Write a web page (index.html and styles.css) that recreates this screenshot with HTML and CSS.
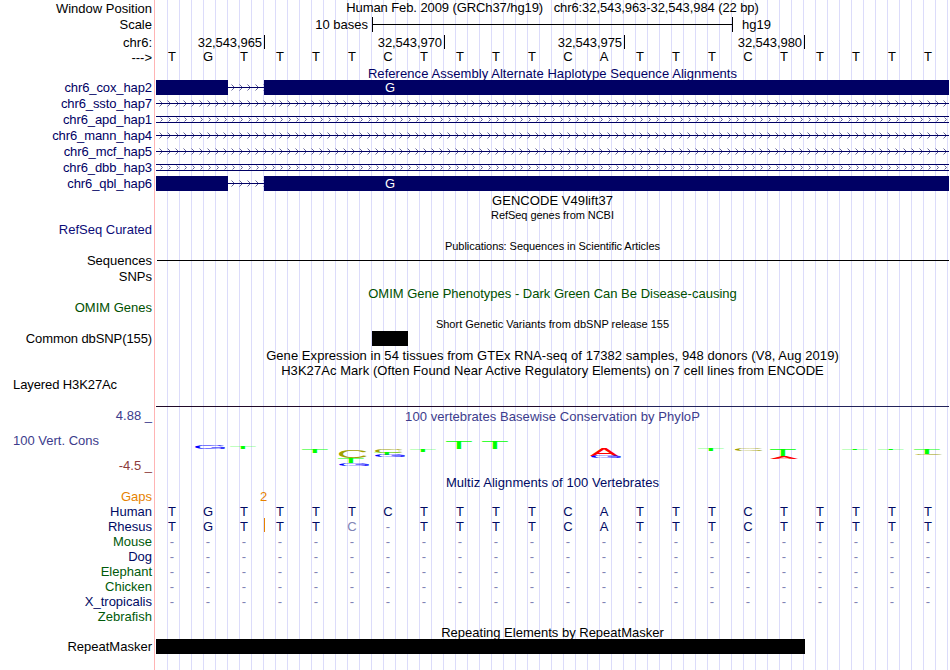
FILE: index.html
```html
<!DOCTYPE html>
<html lang="en">
<head>
    <meta charset="UTF-8">
    <meta name="viewport" content="width=device-width, initial-scale=1.0">
    <title>chr6:32,543,963-32,543,984</title>
    <link rel="stylesheet" href="styles.css">
</head>
<body>

    <!-- Shared arrow patterns -->
    <svg class="defs" width="0" height="0">
        <defs>
            <pattern id="arrows" width="8" height="15" patternUnits="userSpaceOnUse">
                <path class="chevron" d="M3.5 4.5l3 3l-3 3"/>
            </pattern>
            <pattern id="arrows-small" width="8" height="15" patternUnits="userSpaceOnUse">
                <path class="chevron" d="M4.5 5.5l2 2l-2 2"/>
            </pattern>
        </defs>
    </svg>

    <div class="browser">

        <!-- Ruler -->
        <div class="row">
            <div class="label low">Window Position</div>
            <div class="track title position">Human Feb. 2009 (GRCh37/hg19)   chr6:32,543,963-32,543,984 (22 bp)</div>
        </div>
        <div class="row gap2">
            <div class="label">Scale</div>
            <div class="track scale">
                <span class="scale-size">10 bases</span>
                <span class="scale-bar"></span>
                <span>hg19</span>
            </div>
        </div>
        <div class="row short gap3">
            <div class="label">chr6:</div>
            <div class="track ticks">
                <span class="tick first">32,543,965</span>
                <span class="tick">32,543,970</span>
                <span class="tick">32,543,975</span>
                <span class="tick">32,543,980</span>
            </div>
        </div>
        <div class="row">
            <div class="label low">---&gt;</div>
            <div class="track bases" data-seq="TGTTTTCTTTTCATTTCTTTTT"></div>
        </div>

        <!-- Haplotypes -->
        <div class="row short gap2 navy">
            <div class="label"></div>
            <div class="track title wide">Reference Assembly Alternate Haplotype Sequence Alignments</div>
        </div>
        <div class="row tall navy">
            <div class="label">chr6_cox_hap2</div>
            <div class="track hap" data-hap="block"></div>
        </div>
        <div class="row tall navy">
            <div class="label">chr6_ssto_hap7</div>
            <div class="track hap" data-hap="single"></div>
        </div>
        <div class="row tall navy">
            <div class="label">chr6_apd_hap1</div>
            <div class="track hap" data-hap="double"></div>
        </div>
        <div class="row tall navy">
            <div class="label">chr6_mann_hap4</div>
            <div class="track hap" data-hap="single"></div>
        </div>
        <div class="row tall navy">
            <div class="label">chr6_mcf_hap5</div>
            <div class="track hap" data-hap="single"></div>
        </div>
        <div class="row tall navy">
            <div class="label">chr6_dbb_hap3</div>
            <div class="track hap" data-hap="double"></div>
        </div>
        <div class="row tall navy">
            <div class="label">chr6_qbl_hap6</div>
            <div class="track hap" data-hap="block"></div>
        </div>

        <!-- Genes -->
        <div class="row short gap1">
            <div class="label"></div>
            <div class="track title wide">GENCODE V49lift37</div>
        </div>
        <div class="row">
            <div class="label"></div>
            <div class="track title small">RefSeq genes from NCBI</div>
        </div>
        <div class="row">
            <div class="label refseq">RefSeq Curated</div>
            <div class="track"></div>
        </div>

        <!-- Publications -->
        <div class="row gap1">
            <div class="label"></div>
            <div class="track title small">Publications: Sequences in Scientific Articles</div>
        </div>
        <div class="row">
            <div class="label">Sequences</div>
            <div class="track"><div class="seq-line"></div></div>
        </div>
        <div class="row gap1">
            <div class="label">SNPs</div>
            <div class="track"></div>
        </div>

        <!-- OMIM and dbSNP -->
        <div class="row short gap2 green">
            <div class="label"></div>
            <div class="track title">OMIM Gene Phenotypes - Dark Green Can Be Disease-causing</div>
        </div>
        <div class="row green">
            <div class="label">OMIM Genes</div>
            <div class="track"></div>
        </div>
        <div class="row gap1">
            <div class="label"></div>
            <div class="track title small variants">Short Genetic Variants from dbSNP release 155</div>
        </div>
        <div class="row">
            <div class="label tight">Common dbSNP(155)</div>
            <div class="track"><div class="snp"></div></div>
        </div>

        <!-- Expression and regulation -->
        <div class="row gap2">
            <div class="label"></div>
            <div class="track title wide">Gene Expression in 54 tissues from GTEx RNA-seq of 17382 samples, 948 donors (V8, Aug 2019)</div>
        </div>
        <div class="row short">
            <div class="label"></div>
            <div class="track title wide">H3K27Ac Mark (Often Found Near Active Regulatory Elements) on 7 cell lines from ENCODE</div>
        </div>
        <div class="row layered">
            <div class="label left tight">Layered H3K27Ac</div>
            <div class="track"></div>
        </div>

        <!-- Conservation -->
        <div class="row phylop">
            <div class="label limits">
                <span>4.88 _</span>
                <span class="left">100 Vert. Cons</span>
                <span class="min">-4.5 _</span>
            </div>
            <div class="track">
                <div class="title wide">100 vertebrates Basewise Conservation by PhyloP</div>
                <svg id="logo" width="793" height="51" viewBox="156 424 793 51"></svg>
            </div>
        </div>

        <!-- Multiz -->
        <div class="row short blue">
            <div class="label"></div>
            <div class="track title wide">Multiz Alignments of 100 Vertebrates</div>
        </div>
        <div class="row orange">
            <div class="label">Gaps</div>
            <div class="track"><div class="gap-count">2</div></div>
        </div>
        <div class="row blue">
            <div class="label">Human</div>
            <div class="track bases" data-seq="TGTTTTCTTTTCATTTCTTTTT"></div>
        </div>
        <div class="row blue">
            <div class="label">Rhesus</div>
            <div class="track bases" data-seq="TGT|TTc-TTTTCATTTCTTTTT"></div>
        </div>
        <div class="row darkgreen">
            <div class="label">Mouse</div>
            <div class="track bases" data-seq="----------------------"></div>
        </div>
        <div class="row blue">
            <div class="label">Dog</div>
            <div class="track bases" data-seq="----------------------"></div>
        </div>
        <div class="row darkgreen">
            <div class="label">Elephant</div>
            <div class="track bases" data-seq="----------------------"></div>
        </div>
        <div class="row darkgreen">
            <div class="label">Chicken</div>
            <div class="track bases" data-seq="----------------------"></div>
        </div>
        <div class="row blue">
            <div class="label">X_tropicalis</div>
            <div class="track bases" data-seq="----------------------"></div>
        </div>
        <div class="row darkgreen">
            <div class="label">Zebrafish</div>
            <div class="track"></div>
        </div>

        <!-- Repeats -->
        <div class="row short gap1">
            <div class="label"></div>
            <div class="track title">Repeating Elements by RepeatMasker</div>
        </div>
        <div class="row">
            <div class="label">RepeatMasker</div>
            <div class="track"><div class="repeat"></div></div>
        </div>
    </div>

    <script src="tracks.js"></script>
</body>
</html>
```
FILE: styles.css
```css
body {
    margin: 0;
    background: white;
    font-family: "Liberation Sans", Arial, Helvetica, sans-serif;
    font-size: 13px;
    line-height: 15px;
    color: #000;
    overflow: hidden;
}
.defs {
    display: block;
}
/* Guidelines every 12px, pink line between labels and tracks */
.browser {
    width: 950px;
    height: 670px;
    background:
        linear-gradient(#ffb4b4, #ffb4b4) 154px 0 / 1px 100% no-repeat,
        repeating-linear-gradient(to right, transparent 0 11px, #dcdcfa 11px 12px) 156px 0 / 794px 100% no-repeat;
}

/* Rows */
.row {
    display: flex;
    gap: 4px;
    height: 15px;
    white-space: pre;
}
.short {
    height: 14px;
}
.tall {
    height: 16px;
}
.gap1 {
    margin-top: 1px;
}
.gap2 {
    margin-top: 2px;
}
.gap3 {
    margin-top: 3px;
}
.label {
    width: 152px;
    flex: none;
    text-align: right;
}
.label.left {
    text-align: left;
    padding-left: 13px;
    box-sizing: border-box;
}
.low {
    padding-top: 1px;
}
.track {
    width: 793px;
    flex: none;
}
.title {
    text-align: center;
}
.position {
    letter-spacing: -0.09px;
}
.wide {
    letter-spacing: 0.06px;
}
.tight, .tall .label {
    letter-spacing: -0.1px;
}
.small {
    padding-top: 1px;
    font-size: 11px;
    letter-spacing: -0.06px;
}
.variants {
    letter-spacing: 0;
}

/* Colors */
.navy {
    color: #000064;
}
.refseq {
    color: #0c0c78;
}
.green {
    color: #005000;
}
.darkgreen {
    color: #005a0a;
}
.blue {
    color: #000a64;
}
.orange {
    color: #e68200;
}

/* Ruler */
.scale {
    display: flex;
}
.scale-size {
    width: 212px;
    margin-right: 4px;
    text-align: right;
}
.scale-bar {
    width: 359px;
    margin-right: 9px;
    border: solid #000;
    border-width: 0 1px;
    background: linear-gradient(#000, #000) 0 7px / 100% 1px no-repeat;
}
.ticks {
    display: flex;
    letter-spacing: -0.08px;
}
.tick {
    width: 177px;
    padding-right: 2px;
    border-right: 1px solid #000;
    text-align: right;
}
.tick.first {
    width: 106px;
}

/* Bases */
.bases {
    display: flex;
}
.base {
    width: 36px;
    flex: none;
    text-align: center;
}
.base:first-child {
    margin-left: -2px;
}
.mismatch, .dash {
    color: #8084b4;
}
.insert {
    width: 1px;
    height: 14px;
    margin: -1px -3px 0 2px;
    background: #e68200;
}

/* Haplotypes */
.hap svg {
    display: block;
}
.chevron {
    fill: none;
    stroke: #50508c;
    stroke-width: 0.9;
}
.hap-fill {
    fill: #000064;
}
.hap-base {
    fill: #fff;
    text-anchor: middle;
}

/* Items */
.seq-line {
    height: 1px;
    margin: 7px 0 0 1px;
    background: #000;
}
.snp {
    width: 36px;
    height: 15px;
    margin-left: 216px;
    background: #000;
}
.repeat {
    width: 649px;
    height: 15px;
    background: #000;
}
.layered {
    height: 30px;
}
.layered .track {
    background: linear-gradient(to right, #200a28, #200a28 60%, #23235a 62%) 0 29px / 100% 1px no-repeat;
}

/* Conservation */
.phylop {
    height: 68px;
    color: #3c3c8c;
}
.phylop .track {
    white-space: normal;
}
.phylop .title {
    padding-top: 2px;
}
.limits {
    display: flex;
    flex-direction: column;
    gap: 10px;
    height: 67px;
    padding-top: 1px;
    white-space: nowrap;
}
.limits .left {
    text-align: left;
    padding-left: 13px;
}
.min {
    color: #8c3c3c;
}
#logo {
    display: block;
}
.gap-count {
    width: 215px;
    text-align: center;
}
```
FILE: tracks.js
```js
// Base rows
document.querySelectorAll('.bases').forEach(row => {
    for (const ch of row.dataset.seq) {
        const cell = document.createElement('span');
        if (ch === '|') {
            cell.className = 'insert';
        } else {
            cell.className = 'base';
            cell.textContent = ch.toUpperCase();
            if (ch === '-') cell.classList.add('dash');
            if (ch === 'c') cell.classList.add('mismatch');
        }
        row.appendChild(cell);
    }
});

// Haplotype rows
const hapShapes = {
    block: `<rect x="72" width="36" height="15" fill="url(#arrows)"/>
        <rect class="hap-fill" x="72" y="7" width="36" height="1"/>
        <rect class="hap-fill" width="72" height="15"/>
        <rect class="hap-fill" x="108" width="685" height="15"/>
        <text class="hap-base" x="234" y="12">G</text>`,
    single: `<rect width="793" height="15" fill="url(#arrows)"/>
        <rect class="hap-fill" y="7" width="793" height="1"/>`,
    double: `<rect width="793" height="15" fill="url(#arrows-small)"/>
        <rect class="hap-fill" y="4" width="793" height="1"/>
        <rect class="hap-fill" y="10" width="793" height="1"/>`
};
document.querySelectorAll('.hap').forEach(row => {
    row.innerHTML = '<svg width="793" height="15">' + hapShapes[row.dataset.hap] + '</svg>';
});

// Conservation logo: base, left, top, width, height
const logo = [
    ['G', 195, 445, 30, 4],
    ['T', 230, 446, 26, 3],
    ['T', 302, 449, 26, 4],
    ['C', 339, 450, 28, 8],
    ['T', 338, 458, 26, 5],
    ['G', 339, 463, 30, 3],
    ['C', 375, 449, 28, 4],
    ['T', 374, 453, 26, 2],
    ['G', 375, 455, 30, 2],
    ['T', 410, 449, 26, 3],
    ['T', 446, 442, 26, 7],
    ['T', 482, 442, 26, 7],
    ['A', 590, 449, 28, 7],
    ['G', 591, 456, 30, 2],
    ['T', 698, 449, 26, 2],
    ['C', 735, 449, 28, 2],
    ['T', 770, 449, 26, 8],
    ['A', 770, 457, 28, 2],
    ['T', 842, 449, 26, 1],
    ['T', 878, 449, 26, 1],
    ['T', 914, 449, 26, 5],
    ['C', 915, 454, 28, 1]
];
// glyph left edge, width and height at font size 100
const glyphs = {
    A: { x: 0, w: 66, h: 69, color: '#ff0000' },
    C: { x: 5, w: 64, h: 71, color: '#a0a000' },
    G: { x: 5, w: 66, h: 71, color: '#0000ff' },
    T: { x: 2, w: 57, h: 69, color: '#00ff00' }
};
document.getElementById('logo').innerHTML = logo.map(([base, x, y, w, h]) => {
    const g = glyphs[base];
    return `<text font-size="100" fill="${g.color}" transform="translate(${x} ${y + h}) scale(${w / g.w} ${h / g.h})" x="${-g.x}">${base}</text>`;
}).join('');
```
